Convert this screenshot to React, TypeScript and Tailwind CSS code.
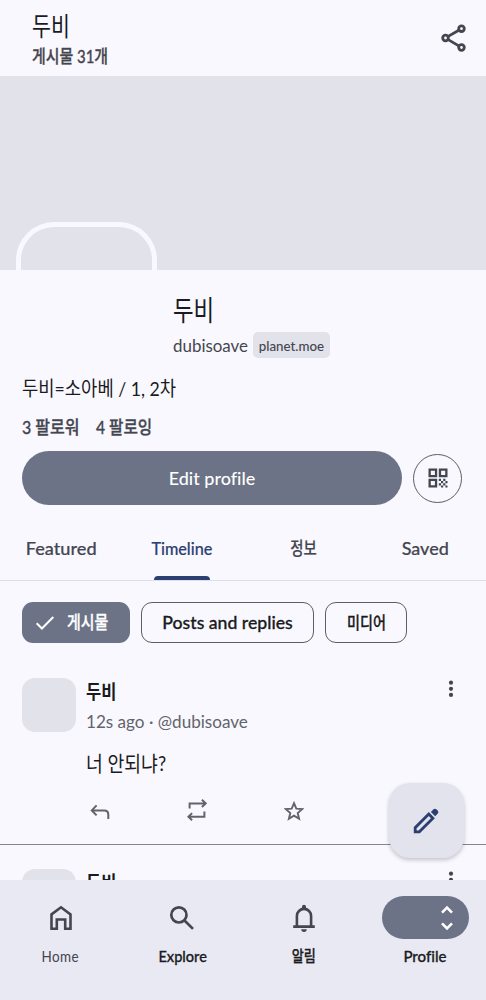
import React from "react";

const tabs = [
  { label: "Featured", text: "text-[18px] scale-x-[1.01]" },
  { label: "Timeline", text: "text-[18px] scale-x-[0.9]", active: true },
  { label: "정보", text: "text-[18px] scale-x-[0.8]" },
  { label: "Saved", text: "text-[18px]" },
];

const ShareIcon = () => (
  <svg width="28" height="30" viewBox="0 0 28 30" fill="none" stroke="#44464f" strokeWidth="2.8">
    <circle cx="5.5" cy="15" r="2.8" />
    <circle cx="21.5" cy="5.7" r="2.8" />
    <circle cx="21.5" cy="24.5" r="2.8" />
    <path d="M8.2 13.4 18.8 7.2M8.2 16.6l10.6 6.3" />
  </svg>
);

const QrIcon = () => (
  <svg width="20" height="20" viewBox="0 0 20 20" fill="#44464f">
    <path
      fillRule="evenodd"
      d="M.5.5h8.7v8.7H.5zM2.8 2.8v4.1h4.1V2.8zM10.8.5h8.7v8.7h-8.7zM13.1 2.8v4.1h4.1V2.8zM.5 10.8h8.7v8.7H.5zM2.8 13.1v4.1h4.1v-4.1z"
    />
    <path d="M10.8 10.8h2.2V13h-2.2zM13 13h2.2v2.2H13zM15.2 10.8h2.2V13h-2.2zM17.4 13h2.1v2.2h-2.1zM10.8 15.2H13v2.2h-2.2zM13 17.4h2.2v2.1H13zM15.2 15.2h2.2v2.2h-2.2zM17.4 17.4h2.1v2.1h-2.1z" />
  </svg>
);

const MoreIcon = () => (
  <svg width="6" height="18" viewBox="0 0 6 18" fill="#44464f">
    <circle cx="3" cy="2.7" r="2.1" />
    <circle cx="3" cy="8.8" r="2.1" />
    <circle cx="3" cy="14.9" r="2.1" />
  </svg>
);

const ReplyIcon = () => (
  <svg width="20" height="16" viewBox="0 0 20 16" fill="none" stroke="#62636c" strokeWidth="2">
    <path d="M6.6 1.4 1.8 6.4l4.8 5M2 6.4h12.2q4.1 0 4.1 4.1V15" />
  </svg>
);

const BoostIcon = () => (
  <svg width="20" height="22" viewBox="0 0 20 22" fill="none" stroke="#62636c" strokeWidth="2">
    <path d="M2.6 9.6V4.4h16M14.9.8l3.7 3.6-3.7 3.6M17.4 12.4v5.3h-16M5.1 14.1l-3.7 3.6 3.7 3.6" />
  </svg>
);

const StarIcon = () => (
  <svg width="20" height="20" viewBox="0 0 20 20" fill="none" stroke="#62636c" strokeWidth="1.9">
    <path d="M10 2.2 12.3 7.6 18.2 8.1 13.7 12 15.1 17.7 10 14.6 4.9 17.7 6.3 12 1.8 8.1 7.7 7.6z" />
  </svg>
);

const PencilIcon = () => (
  <svg width="27" height="27" viewBox="0 0 27 27">
    <path d="M2.2 24.8v-4.1L15.8 7.1l4.1 4.1L6.3 24.8z" fill="none" stroke="#2b4071" strokeWidth="2.8" />
    <path d="M17.9 4.9 20.5 2.3q1.4-1.3 2.8 0l1.5 1.5q1.3 1.4 0 2.8l-2.6 2.6z" fill="#2b4071" />
  </svg>
);

const HomeIcon = () => (
  <svg width="24" height="26" viewBox="0 0 24 26" fill="none" stroke="#44464f" strokeWidth="2.6">
    <path d="M2.5 9.4 12 2.3l9.5 7.1v14.3h-5.3v-9.2H7.8v9.2H2.5z" />
  </svg>
);

const SearchIcon = () => (
  <svg width="26" height="26" viewBox="0 0 26 26" fill="none" stroke="#44464f" strokeWidth="2.7">
    <circle cx="9.9" cy="9.9" r="7.6" />
    <path d="m15.5 15.5 8.5 8.4" />
  </svg>
);

const BellIcon = () => (
  <svg width="24" height="28" viewBox="0 0 24 28">
    <path
      d="M1.2 22.6h21.6M4.9 22V12a7.1 7.1 0 0 1 14.2 0v10"
      fill="none"
      stroke="#44464f"
      strokeWidth="2.6"
    />
    <path d="M10 4V2.7a2 2 0 0 1 4 0V4zM9.3 25.2h5.4a2.7 2.7 0 0 1-5.4 0z" fill="#44464f" />
  </svg>
);

const Post = ({ children }: { children?: React.ReactNode }) => (
  <article className="flex px-[22px] pt-6">
    <div className="size-[54px] shrink-0 rounded-[13px] bg-[#e2e2eb]" />
    <div className="ml-[10px] flex-1">
      <div className="flex h-7 items-center justify-between">
        <span className="origin-left scale-x-[0.87] text-[19px] font-bold text-[#1a1b21]">두비</span>
        <div className="mr-[10px] pb-[7px]">
          <MoreIcon />
        </div>
      </div>
      {children}
    </div>
  </article>
);

export default function App() {
  return (
    <div className="relative flex h-[1000px] w-[486px] flex-col overflow-hidden whitespace-nowrap bg-[#f9f8ff] font-['Lato','Noto_Sans_CJK_KR',sans-serif] text-[#1a1b21] [font-variant-ligatures:none]">
      <header className="flex h-[76px] shrink-0 items-center justify-between pl-8 pr-[18px]">
        <div className="flex flex-col items-start pt-[3px]">
          <h1 className="flex h-[30px] origin-left scale-x-[0.79] items-center text-[26px]">두비</h1>
          <p className="mt-1 flex h-[22px] origin-left scale-x-[0.83] items-center text-[18px] font-medium text-[#44464f] [-webkit-text-stroke:0.3px]">
            게시물 31개
          </p>
        </div>
        <ShareIcon />
      </header>

      <div className="flex h-[194px] shrink-0 items-end overflow-hidden bg-[#e2e2eb] pl-4">
        <div className="h-12 w-[141px] rounded-t-[38px] border-[5px] border-b-0 border-[#f9f8ff]" />
      </div>

      <section className="shrink-0 px-[22px] pt-[25px]">
        <div className="pl-[151px]">
          <h2 className="flex h-[30px] w-fit origin-left scale-x-[0.8] items-center text-[28px]">두비</h2>
          <div className="mt-[7px] flex h-[26px] items-center">
            <div className="w-20 text-[18px] text-[#44464f]">
              <span className="inline-block origin-left scale-x-[0.94]">dubisoave</span>
            </div>
            <div className="flex h-[26px] w-[77px] items-center justify-center rounded-[5px] bg-[#e2e2eb] text-[14px] font-medium text-[#44464f]">
              <span className="scale-x-[0.95]">planet.moe</span>
            </div>
          </div>
        </div>
        <p className="mt-[15px] flex h-[30px] w-fit origin-left scale-x-[0.885] items-center text-[20px]">
          두비=소아베 / 1, 2차
        </p>
        <div className="mt-3 flex h-6 items-center text-[18px] font-medium text-[#44464f] [-webkit-text-stroke:0.3px]">
          <span className="w-[74px]">
            <span className="inline-block origin-left scale-x-[0.89]">3 팔로워</span>
          </span>
          <span className="inline-block origin-left scale-x-[0.87]">4 팔로잉</span>
        </div>
        <div className="mt-3 flex items-center gap-[11px]">
          <button className="h-[54px] w-[380px] rounded-full bg-[#6c7386] text-[18px] font-medium text-white">
            Edit profile
          </button>
          <button className="flex size-[49px] items-center justify-center rounded-full border border-[#5c5d67]">
            <QrIcon />
          </button>
        </div>
      </section>

      <nav className="mt-[11px] flex h-[65px] shrink-0 border-b border-[#dedee8]">
        {tabs.map((tab) => (
          <div key={tab.label} className="flex flex-1 flex-col items-center">
            <div
              className={`flex h-[60px] items-center pt-1 font-medium [-webkit-text-stroke:0.2px] ${tab.text} ${
                tab.active ? "text-[#2b4071]" : "text-[#44464f]"
              }`}
            >
              {tab.label}
            </div>
            {tab.active && <div className="h-1 w-14 rounded-t-[4px] bg-[#2b4071]" />}
          </div>
        ))}
      </nav>

      <div className="mt-[21px] flex h-[41px] shrink-0 gap-[11px] px-[22px] text-[18px] font-medium [-webkit-text-stroke:0.3px]">
        <button className="flex w-[108px] items-center rounded-[11px] bg-[#6c7386] pl-3 text-white">
          <svg width="22" height="22" viewBox="0 0 22 22" fill="none" stroke="white" strokeWidth="2">
            <path d="m2.7 11.3 5.2 5.2L19.3 5" />
          </svg>
          <span className="ml-[11px] origin-left scale-x-[0.83]">게시물</span>
        </button>
        <button className="w-[173px] rounded-[11px] border border-[#5c5d67]">
          <span className="inline-block scale-x-[0.98]">Posts and replies</span>
        </button>
        <button className="w-[82px] rounded-[11px] border border-[#5c5d67]">
          <span className="inline-block scale-x-[0.83] text-[17px]">미디어</span>
        </button>
      </div>

      <main className="mt-[11px] min-h-0 flex-1 overflow-hidden">
        <div className="h-[191px] border-b border-[#85868f]">
          <Post>
            <p className="mt-1 flex h-[22px] w-fit origin-left scale-x-[0.95] items-center text-[18px] text-[#62636c]">
              12s ago · @dubisoave
            </p>
            <p className="mt-4 flex h-[30px] w-fit origin-left scale-x-[0.87] items-center text-[21px]">
              너 안되냐?
            </p>
            <div className="mt-[21px] flex h-[22px] items-center pl-1">
              <div className="w-[97px] pt-1">
                <ReplyIcon />
              </div>
              <div className="w-[97px]">
                <BoostIcon />
              </div>
              <div className="pt-[2px]">
                <StarIcon />
              </div>
            </div>
          </Post>
        </div>
        <Post />
      </main>

      <footer className="flex h-[120px] shrink-0 bg-[#e9e9f4] pt-4 text-[16px]">
        <div className="flex flex-1 flex-col items-center">
          <div className="flex h-[43px] items-center">
            <HomeIcon />
          </div>
          <span className="mt-[5px] scale-x-[0.84] tracking-[0.5px] text-[#44464f]">Home</span>
        </div>
        <div className="flex flex-1 flex-col items-center">
          <div className="flex h-[43px] items-center">
            <SearchIcon />
          </div>
          <span className="mt-[5px] scale-x-[0.91] font-medium [-webkit-text-stroke:0.3px]">Explore</span>
        </div>
        <div className="flex flex-1 flex-col items-center">
          <div className="flex h-[43px] items-center">
            <BellIcon />
          </div>
          <span className="mt-[5px] scale-x-[0.82] font-medium [-webkit-text-stroke:0.3px]">알림</span>
        </div>
        <div className="flex flex-1 flex-col items-center">
          <div className="flex h-[43px] w-[87px] items-center justify-end rounded-full bg-[#6c7386] pr-[15px]">
            <svg width="14" height="26" viewBox="0 0 14 26" fill="none" stroke="white" strokeWidth="2.6">
              <path d="m2 7.7 5-5 5 5M2 18.3l5 5 5-5" />
            </svg>
          </div>
          <span className="mt-[5px] scale-x-[0.94] font-medium [-webkit-text-stroke:0.3px]">Profile</span>
        </div>
      </footer>

      <button className="absolute left-[389px] top-[783px] flex size-[75px] items-center justify-center rounded-[21px] bg-[#e3e3ee] shadow-[0_2px_4px_rgba(0,0,0,0.22)]">
        <PencilIcon />
      </button>
    </div>
  );
}
